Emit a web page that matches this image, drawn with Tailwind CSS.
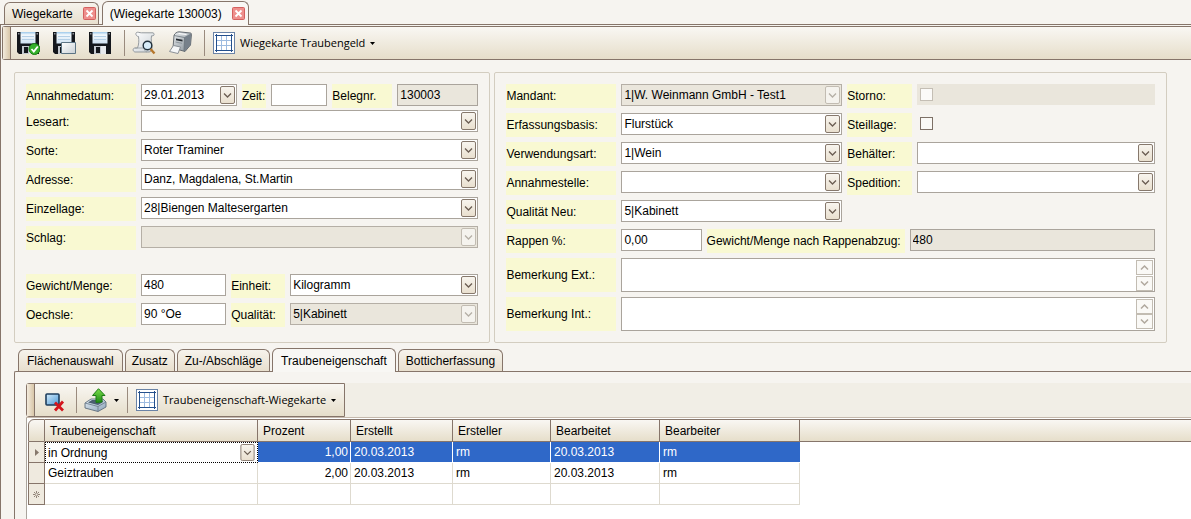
<!DOCTYPE html>
<html lang="de">
<head>
<meta charset="utf-8">
<title>Wiegekarte 130003</title>
<script src="https://cdn.jsdelivr.net/npm/@tailwindcss/browser@4"></script>
</head>
<body class="flex min-h-screen flex-col bg-[#f6f4f0] font-['Liberation_Sans',Arial,sans-serif] text-xs text-black">
<svg class="absolute size-0" aria-hidden="true">
  <defs>
    <linearGradient id="g-btn" x1="0" y1="0" x2="0" y2="1"><stop offset="0" stop-color="#f8f5ef"/><stop offset="1" stop-color="#e9dfce"/></linearGradient>
    <linearGradient id="g-blue" x1="0" y1="0" x2="1" y2="1"><stop offset="0" stop-color="#d4ecfb"/><stop offset="1" stop-color="#4b98d6"/></linearGradient>
    <linearGradient id="g-label" x1="0" y1="0" x2="0" y2="1"><stop offset="0" stop-color="#9cc8ea"/><stop offset=".25" stop-color="#f4f9fd"/><stop offset="1" stop-color="#cfe2f2"/></linearGradient>
    <linearGradient id="g-steel" x1="0" y1="0" x2="1" y2="1"><stop offset="0" stop-color="#eceff1"/><stop offset="1" stop-color="#7d8890"/></linearGradient>
    <linearGradient id="g-tray" x1="0" y1="0" x2="1" y2="1"><stop offset="0" stop-color="#e4edf5"/><stop offset="1" stop-color="#8ba3b8"/></linearGradient>
    <linearGradient id="g-green" x1="0" y1="0" x2="0" y2="1"><stop offset="0" stop-color="#7be04a"/><stop offset="1" stop-color="#1f8a16"/></linearGradient>
    <linearGradient id="g-paper" x1="0" y1="0" x2="1" y2="1"><stop offset="0" stop-color="#ffffff"/><stop offset="1" stop-color="#c9d0d5"/></linearGradient>
  </defs>
  <symbol id="drop" viewBox="0 0 15 18"><rect x=".5" y=".5" width="14" height="17" rx="1.5" fill="url(#g-btn)" stroke="#86786c"/><path d="M4 7.500l3.500 3.500L11 7.500" fill="none" stroke="#6b5d52" stroke-width="1.300"/></symbol>
  <symbol id="drop-off" viewBox="0 0 15 18"><rect x=".5" y=".5" width="14" height="17" rx="1.5" fill="#f5f3ee" stroke="#c2bcb2"/><path d="M4 7.500l3.500 3.500L11 7.500" fill="none" stroke="#b5afa6" stroke-width="1.300"/></symbol>
  <symbol id="spin-up" viewBox="0 0 17 15"><rect x=".5" y=".5" width="16" height="14" fill="#faf9f6" stroke="#c2bcb2"/><path d="M5 9.500L8.500 6l3.500 3.500" fill="none" stroke="#b0a89e" stroke-width="1.500"/></symbol>
  <symbol id="spin-down" viewBox="0 0 17 15"><rect x=".5" y=".5" width="16" height="14" fill="#faf9f6" stroke="#c2bcb2"/><path d="M5 5.500L8.500 9l3.500-3.500" fill="none" stroke="#b0a89e" stroke-width="1.500"/></symbol>
  <symbol id="close" viewBox="0 0 13 13"><rect x=".5" y=".5" width="12" height="12" rx="1" fill="#ee8f8c" stroke="#d4605f"/><path d="M3.500 3.500l6 6m0-6l-6 6" stroke="#fff" stroke-width="1.800"/></symbol>
  <symbol id="disk" viewBox="0 0 22 22"><path d="M0 0h22v22H2l-2-2z" fill="#14171c"/><path d="M3.500 0h15v11.500h-15z" fill="url(#g-label)"/><path d="M5 4.500h12M5 7.500h12" stroke="#b4cfe6"/><path d="M5 14h12v8H5z" fill="#c3c8ce"/><path d="M12 14h5v8h-5z" fill="#e6e9ec"/><path d="M7 15h4v6H7z" fill="#14171c"/><path d="M1 1h1.500v1.500H1zM19.500 1H21v1.500h-1.500z" fill="#8a9099"/></symbol>
  <symbol id="gridicon" viewBox="0 0 22 22"><rect x=".5" y=".5" width="21" height="21" fill="#fff" stroke="#6a83a6"/><path d="M8.500 4v14M13.500 4v14M4 8.500h14M4 13.500h14" stroke="#9dbbe0"/><path d="M2 3.500h18M2 18.500h18M3.500 2v18M18.500 2v18" stroke="#24508c"/></symbol>
</svg>

<!-- Document tabs -->
<nav class="flex h-6 shrink-0 items-end gap-[3px] pl-1" aria-label="Dokumente">
  <div class="flex h-[22px] items-center gap-2.5 rounded-t-md border border-b-0 border-[#86756a] bg-linear-to-b from-[#f6f3ec] to-[#e8dfce] pr-[2px] pl-[7px]">
    <a href="#wiegekarte">Wiegekarte</a>
    <button type="button" aria-label="Wiegekarte schließen"><svg class="block h-[13px] w-[13px]"><use href="#close"/></svg></button>
  </div>
  <div class="relative z-10 -mb-px flex h-6 items-center gap-2.5 rounded-t-md border border-b-0 border-[#86756a] bg-[#f8f7f4] pr-[3px] pl-[7px]">
    <a href="#wiegekarte-130003">(Wiegekarte 130003)</a>
    <button type="button" aria-label="Wiegekarte 130003 schließen"><svg class="block h-[13px] w-[13px]"><use href="#close"/></svg></button>
  </div>
</nav>

<div class="flex grow flex-col border-t border-l border-[#86756a] pt-px pl-px">
  <!-- Main toolbar -->
  <div role="toolbar" class="flex h-[34px] shrink-0 items-center rounded-l-[3px] border border-r-0 border-[#86756a] bg-linear-to-b from-[#f9f7f3] to-[#e6deca]">
    <span class="h-full w-2 border-r border-[#86756a] bg-linear-to-r from-[#f3ebdd] to-[#d8c6a8]"></span>
    <div class="flex items-center gap-[13px] pl-1.5">
      <button type="button" aria-label="Speichern und schließen"><svg class="block h-6 w-[23px]" viewBox="0 0 23 24"><use href="#disk" x="0" y="1" width="22" height="22"/><circle cx="17.500" cy="18" r="5.500" fill="#36b02c" stroke="#147a12"/><path d="M14.500 18l2.300 2.500 4-5" fill="none" stroke="#fff" stroke-width="1.800"/></svg></button>
      <button type="button" aria-label="Speichern und neu"><svg class="block h-6 w-[23px]" viewBox="0 0 23 24"><use href="#disk" x="0" y="1" width="22" height="22"/><path d="M8.500 11.500h14v11h-14z" fill="url(#g-paper)" stroke="#5c7484"/></svg></button>
      <button type="button" aria-label="Speichern"><svg class="block h-6 w-[22px]" viewBox="0 0 22 24"><use href="#disk" x="0" y="1" width="22" height="22"/></svg></button>
    </div>
    <span class="mr-[7px] ml-[13px] h-[26px] w-px bg-[#9a8b7e]"></span>
    <div class="flex items-center gap-3">
      <button type="button" aria-label="Vorschau"><svg class="block h-6 w-6" viewBox="0 0 24 24"><path d="M4.500 1.500c1.500-.8 3 .3 5 .3H21c1.500.5 1.500 2.500 0 3h-1.500c-.8 4 .5 8 .5 12 0 2.500-1 4.200-3 4.200H3c-2.500-.5-2.500-4 0-4h2.500c1.500-4 1.500-7.500 1-11.500C4.500 5.500 3 3 4.500 1.500z" fill="url(#g-paper)" stroke="#8b9196" stroke-width=".9"/><path d="M3 17h10c-1 1.500 0 3.500 2 4" fill="none" stroke="#9ba1a6" stroke-width=".9"/><circle cx="15.500" cy="14.500" r="4.300" fill="#d6ebf8" stroke="#20303c" stroke-width="1.400"/><path d="M18.500 18l4 4.500" stroke="#b5772c" stroke-width="2.400"/></svg></button>
      <button type="button" aria-label="Drucken"><svg class="block h-6 w-6" viewBox="0 0 24 24"><path d="M6 4.500C6.500 2.500 9 .8 11 .8L22.500 2c1 .2 1 1 .9 2L22.500 14 17 20.500 5 17z" fill="url(#g-steel)" stroke="#596067" stroke-width=".9"/><path d="M16.500 6L23 2.500 22.500 14 16 20.500z" fill="#76808a"/><path d="M6 4.500L16.500 6.500 16 20" fill="none" stroke="#6a737b" stroke-width=".8"/><path d="M8 7.500l6.500 1.300v1.800L8 9.300z" fill="#242a30"/><path d="M7.500 11l6.500 1.300" stroke="#8d969d"/><path d="M10.500 2.500l8 1" stroke="#fff"/><path d="M5.500 14.500l7 1.500-2.500 6.500-8.500-2z" fill="#f5f7f8" stroke="#7f868c" stroke-width=".9"/></svg></button>
    </div>
    <span class="mr-2 ml-3 h-[26px] w-px bg-[#9a8b7e]"></span>
    <button type="button" class="flex items-center gap-[5px] font-['Open_Sans',sans-serif] text-[11px]"><svg class="block h-[22px] w-[22px]"><use href="#gridicon"/></svg><span>Wiegekarte Traubengeld</span><svg class="h-[3px] w-[5px]" viewBox="0 0 5 3"><path d="M0 0h5L2.500 3z"/></svg></button>
  </div>

  <!-- Form -->
  <form class="grid grid-cols-[476fr_672fr] gap-1 pt-3 pr-6 pl-3">
    <fieldset class="flex min-w-0 flex-col gap-[5px] rounded-xs border border-[#d3cdc0] px-[11px] pt-[11px] pb-[15px] leading-6">
      <div class="-mb-[3px] flex h-6 gap-[5px]">
        <label for="datum" class="w-[110px] bg-[#f9f9d2]">Annahmedatum:</label>
        <div class="flex h-[22px] flex-[94] items-center border border-[#aaa49c] bg-white pr-px"><input id="datum" value="29.01.2013" class="h-5 w-0 grow bg-transparent pl-0.5 outline-none"><button type="button" aria-label="Kalender öffnen"><svg class="block h-[18px] w-[15px]"><use href="#drop"/></svg></button></div>
        <label for="zeit" class="w-6 bg-[#f9f9d2]">Zeit:</label>
        <input id="zeit" class="h-[22px] w-0 flex-[51] border border-[#aaa49c] bg-white px-0.5">
        <label for="beleg" class="w-[60px] bg-[#f9f9d2]">Belegnr.</label>
        <input id="beleg" value="130003" readonly class="h-[22px] w-0 flex-[76] border border-[#aaa49c] bg-[#eae6dc] px-0.5">
      </div>
      <div class="flex h-6 gap-[5px]">
        <label for="leseart" class="w-[110px] bg-[#f9f9d2]">Leseart:</label>
        <div class="relative h-[22px] grow"><select id="leseart" class="block h-[22px] w-full appearance-none border border-[#aaa49c] bg-white pl-0.5 leading-5"><option></option></select><svg class="pointer-events-none absolute top-0.5 right-0.5 h-[18px] w-[15px]"><use href="#drop"/></svg></div>
      </div>
      <div class="flex h-6 gap-[5px]">
        <label for="sorte" class="w-[110px] bg-[#f9f9d2]">Sorte:</label>
        <div class="relative h-[22px] grow"><select id="sorte" class="block h-[22px] w-full appearance-none border border-[#aaa49c] bg-white pl-0.5 leading-5"><option>Roter Traminer</option></select><svg class="pointer-events-none absolute top-0.5 right-0.5 h-[18px] w-[15px]"><use href="#drop"/></svg></div>
      </div>
      <div class="flex h-6 gap-[5px]">
        <label for="adresse" class="w-[110px] bg-[#f9f9d2]">Adresse:</label>
        <div class="relative h-[22px] grow"><select id="adresse" class="block h-[22px] w-full appearance-none border border-[#aaa49c] bg-white pl-0.5 leading-5"><option>Danz, Magdalena, St.Martin</option></select><svg class="pointer-events-none absolute top-0.5 right-0.5 h-[18px] w-[15px]"><use href="#drop"/></svg></div>
      </div>
      <div class="flex h-6 gap-[5px]">
        <label for="einzellage" class="w-[110px] bg-[#f9f9d2]">Einzellage:</label>
        <div class="relative h-[22px] grow"><select id="einzellage" class="block h-[22px] w-full appearance-none border border-[#aaa49c] bg-white pl-0.5 leading-5"><option>28|Biengen Maltesergarten</option></select><svg class="pointer-events-none absolute top-0.5 right-0.5 h-[18px] w-[15px]"><use href="#drop"/></svg></div>
      </div>
      <div class="mb-[19px] flex h-6 gap-[5px]">
        <label for="schlag" class="w-[110px] bg-[#f9f9d2]">Schlag:</label>
        <div class="relative h-[22px] grow"><select id="schlag" disabled class="block h-[22px] w-full appearance-none border border-[#b5afa6] bg-[#eae6dc] pl-0.5 leading-5 opacity-100"><option></option></select><svg class="pointer-events-none absolute top-0.5 right-0.5 h-[18px] w-[15px]"><use href="#drop-off"/></svg></div>
      </div>
      <div class="flex h-6 gap-[5px]">
        <label for="gewicht" class="w-[110px] bg-[#f9f9d2]">Gewicht/Menge:</label>
        <input id="gewicht" value="480" class="h-[22px] w-0 flex-[79] border border-[#aaa49c] bg-white px-0.5">
        <label for="einheit" class="w-[54px] bg-[#f9f9d2]">Einheit:</label>
        <div class="relative h-[22px] flex-[188]"><select id="einheit" class="block h-[22px] w-full appearance-none border border-[#aaa49c] bg-white pl-0.5 leading-5"><option>Kilogramm</option></select><svg class="pointer-events-none absolute top-0.5 right-0.5 h-[18px] w-[15px]"><use href="#drop"/></svg></div>
      </div>
      <div class="flex h-6 gap-[5px]">
        <label for="oechsle" class="w-[110px] bg-[#f9f9d2]">Oechsle:</label>
        <input id="oechsle" value="90 °Oe" class="h-[22px] w-0 flex-[79] border border-[#aaa49c] bg-white px-0.5">
        <label for="qualitaet" class="w-[54px] bg-[#f9f9d2]">Qualität:</label>
        <div class="relative h-[22px] flex-[188]"><select id="qualitaet" disabled class="block h-[22px] w-full appearance-none border border-[#b5afa6] bg-[#eae6dc] pl-0.5 leading-5 text-black opacity-100"><option>5|Kabinett</option></select><svg class="pointer-events-none absolute top-0.5 right-0.5 h-[18px] w-[15px]"><use href="#drop-off"/></svg></div>
      </div>
    </fieldset>

    <fieldset class="flex min-w-0 flex-col gap-[5px] rounded-xs border border-[#d3cdc0] px-[11px] pt-[11px] pb-[11px] leading-6">
      <div class="grid h-6 grid-cols-[110px_221fr_65px_238fr] gap-[5px]">
        <label for="mandant" class="bg-[#f9f9d2]">Mandant:</label>
        <div class="relative h-[22px]"><select id="mandant" disabled class="block h-[22px] w-full appearance-none border border-[#b5afa6] bg-[#eae6dc] pl-0.5 leading-5 text-black opacity-100"><option>1|W. Weinmann GmbH - Test1</option></select><svg class="pointer-events-none absolute top-0.5 right-0.5 h-[18px] w-[15px]"><use href="#drop-off"/></svg></div>
        <label for="storno" class="bg-[#f9f9d2]">Storno:</label>
        <div class="flex h-[21px] items-center bg-[#eae6dc] pl-[3px]"><input id="storno" type="checkbox" disabled class="h-[13px] w-[13px] appearance-none border border-[#c4beb4] bg-[#fbfaf8]"></div>
      </div>
      <div class="grid h-6 grid-cols-[110px_221fr_65px_238fr] gap-[5px]">
        <label for="basis" class="bg-[#f9f9d2]">Erfassungsbasis:</label>
        <div class="relative h-[22px]"><select id="basis" class="block h-[22px] w-full appearance-none border border-[#aaa49c] bg-white pl-0.5 leading-5"><option>Flurstück</option></select><svg class="pointer-events-none absolute top-0.5 right-0.5 h-[18px] w-[15px]"><use href="#drop"/></svg></div>
        <label for="steillage" class="bg-[#f9f9d2]">Steillage:</label>
        <div class="flex h-[21px] items-center pl-[3px]"><input id="steillage" type="checkbox" class="h-[13px] w-[13px] appearance-none border border-[#7d7066] bg-[#faf9f6]"></div>
      </div>
      <div class="grid h-6 grid-cols-[110px_221fr_65px_238fr] gap-[5px]">
        <label for="verwendung" class="bg-[#f9f9d2]">Verwendungsart:</label>
        <div class="relative h-[22px]"><select id="verwendung" class="block h-[22px] w-full appearance-none border border-[#aaa49c] bg-white pl-0.5 leading-5"><option>1|Wein</option></select><svg class="pointer-events-none absolute top-0.5 right-0.5 h-[18px] w-[15px]"><use href="#drop"/></svg></div>
        <label for="behaelter" class="bg-[#f9f9d2]">Behälter:</label>
        <div class="relative h-[22px]"><select id="behaelter" class="block h-[22px] w-full appearance-none border border-[#aaa49c] bg-white pl-0.5 leading-5"><option></option></select><svg class="pointer-events-none absolute top-0.5 right-0.5 h-[18px] w-[15px]"><use href="#drop"/></svg></div>
      </div>
      <div class="grid h-6 grid-cols-[110px_221fr_65px_238fr] gap-[5px]">
        <label for="annahme" class="bg-[#f9f9d2]">Annahmestelle:</label>
        <div class="relative h-[22px]"><select id="annahme" class="block h-[22px] w-full appearance-none border border-[#aaa49c] bg-white pl-0.5 leading-5"><option></option></select><svg class="pointer-events-none absolute top-0.5 right-0.5 h-[18px] w-[15px]"><use href="#drop"/></svg></div>
        <label for="spedition" class="bg-[#f9f9d2]">Spedition:</label>
        <div class="relative h-[22px]"><select id="spedition" class="block h-[22px] w-full appearance-none border border-[#aaa49c] bg-white pl-0.5 leading-5"><option></option></select><svg class="pointer-events-none absolute top-0.5 right-0.5 h-[18px] w-[15px]"><use href="#drop"/></svg></div>
      </div>
      <div class="grid h-6 grid-cols-[110px_221fr_65px_238fr] gap-[5px]">
        <label for="qneu" class="bg-[#f9f9d2]">Qualität Neu:</label>
        <div class="relative h-[22px]"><select id="qneu" class="block h-[22px] w-full appearance-none border border-[#aaa49c] bg-white pl-0.5 leading-5"><option>5|Kabinett</option></select><svg class="pointer-events-none absolute top-0.5 right-0.5 h-[18px] w-[15px]"><use href="#drop"/></svg></div>
      </div>
      <div class="grid h-6 grid-cols-[110px_80fr_198px_245fr] gap-[5px]">
        <label for="rappen" class="bg-[#f9f9d2]">Rappen %:</label>
        <input id="rappen" value="0,00" class="h-[22px] w-full border border-[#aaa49c] bg-white px-0.5">
        <label for="abzug" class="bg-[#f9f9d2] whitespace-nowrap">Gewicht/Menge nach Rappenabzug:</label>
        <input id="abzug" value="480" readonly class="h-[22px] w-full border border-[#aaa49c] bg-[#eae6dc] px-0.5">
      </div>
      <div class="flex h-[34px] gap-[5px]">
        <label for="bemext" class="flex w-[110px] items-center bg-[#f9f9d2]">Bemerkung Ext.:</label>
        <div class="flex grow items-center border border-[#aaa49c] bg-white pr-px"><textarea id="bemext" class="h-8 w-0 grow resize-none px-0.5 outline-none"></textarea><div class="flex flex-col gap-px"><button type="button" aria-label="Ext. nach oben"><svg class="block h-[15px] w-[17px]"><use href="#spin-up"/></svg></button><button type="button" aria-label="Ext. nach unten"><svg class="block h-[15px] w-[17px]"><use href="#spin-down"/></svg></button></div></div>
      </div>
      <div class="flex h-[34px] gap-[5px]">
        <label for="bemint" class="flex w-[110px] items-center bg-[#f9f9d2]">Bemerkung Int.:</label>
        <div class="flex grow items-center border border-[#aaa49c] bg-white pr-px"><textarea id="bemint" class="h-8 w-0 grow resize-none px-0.5 outline-none"></textarea><div class="flex flex-col"><button type="button" aria-label="Int. nach oben"><svg class="block h-[15px] w-[17px]"><use href="#spin-up"/></svg></button><button type="button" aria-label="Int. nach unten"><svg class="block h-[15px] w-[17px]"><use href="#spin-down"/></svg></button></div></div>
      </div>
    </fieldset>
  </form>

  <!-- Detail tabs -->
  <div role="tablist" class="mt-[5px] flex h-[23px] shrink-0 items-end gap-0.5 pl-4">
    <button role="tab" type="button" class="h-[22px] rounded-t-md border border-b-0 border-[#86756a] bg-linear-to-b from-[#f6f3ec] to-[#e8dfce] px-2">Flächenauswahl</button>
    <button role="tab" type="button" class="h-[22px] rounded-t-md border border-b-0 border-[#86756a] bg-linear-to-b from-[#f6f3ec] to-[#e8dfce] px-1.5">Zusatz</button>
    <button role="tab" type="button" class="h-[22px] rounded-t-md border border-b-0 border-[#86756a] bg-linear-to-b from-[#f6f3ec] to-[#e8dfce] px-[7px]">Zu-/Abschläge</button>
    <button role="tab" type="button" aria-selected="true" class="relative z-10 -mb-px h-6 rounded-t-md border border-b-0 border-[#86756a] bg-[#f8f7f4] px-2">Traubeneigenschaft</button>
    <button role="tab" type="button" class="h-[22px] rounded-t-md border border-b-0 border-[#86756a] bg-linear-to-b from-[#f6f3ec] to-[#e8dfce] px-[7px]">Botticherfassung</button>
  </div>
  <section class="ml-3 flex grow flex-col rounded-tl-xs border-t border-l border-[#86756a] pt-[11px] pl-[11px]">
    <div class="border-b border-[#c5b9ad] bg-[#f1eee6]">
      <div role="toolbar" class="flex h-[34px] w-fit items-center rounded-l-[3px] border border-[#86756a] bg-linear-to-b from-[#f9f7f3] to-[#e6deca]">
        <span class="h-full w-2 border-r border-[#86756a] bg-linear-to-r from-[#f3ebdd] to-[#d8c6a8]"></span>
        <button type="button" class="pt-1 pl-2.5" aria-label="Zeile löschen"><svg class="block h-[19px] w-5" viewBox="0 0 20 19"><rect x="1" y="1" width="13" height="11" rx="1" fill="url(#g-blue)" stroke="#1d3d5c" stroke-width="1.600"/><path d="M10 9.500l8 8M18 8.500l-8 9" stroke="#d3141c" stroke-width="2.800"/></svg></button>
        <span class="mr-[7px] ml-[11px] h-[26px] w-px bg-[#9a8b7e]"></span>
        <button type="button" class="flex items-center gap-[7px]" aria-label="Exportieren"><svg class="block h-6 w-[23px]" viewBox="0 0 23 24"><path d="M1 15l6-4h12l3 3v5l-8 4.500L1 20z" fill="url(#g-tray)" stroke="#5d6d7c" stroke-width=".9"/><path d="M1 15l13 3.500L22 14M14 18.500v5" fill="none" stroke="#6f8090" stroke-width=".9"/><path d="M4 14.500l4-2.500h10l1 2-5 3z" fill="#4a5e70"/><path d="M14.500.7L21 7.500h-3V14l-6 .5v-7H8.500z" fill="url(#g-green)" stroke="#1b7a14"/></svg><svg class="h-[3px] w-[5px]" viewBox="0 0 5 3"><path d="M0 0h5L2.500 3z"/></svg></button>
        <span class="mr-2 ml-2 h-[26px] w-px bg-[#9a8b7e]"></span>
        <button type="button" class="flex items-center gap-[5px] pr-2 font-['Open_Sans',sans-serif] text-[11px]"><svg class="block h-[22px] w-[22px]"><use href="#gridicon"/></svg><span>Traubeneigenschaft-Wiegekarte</span><svg class="h-[3px] w-[5px]" viewBox="0 0 5 3"><path d="M0 0h5L2.500 3z"/></svg></button>
      </div>
    </div>
    <div class="grow border-l border-[#aaa49c] bg-white pt-px pl-px">
      <table class="w-full table-fixed border-separate border-spacing-0 text-left">
        <colgroup><col class="w-[17px]"><col class="w-[213px]"><col class="w-[93px]"><col class="w-[102px]"><col class="w-[98px]"><col class="w-[109px]"><col class="w-[140px]"><col></colgroup>
        <thead>
          <tr class="h-[23px] *:border-y *:border-[#86756a] *:bg-linear-to-b *:from-[#f9f7f3] *:to-[#e6deca] *:p-0 *:pl-[5px] *:font-normal">
            <th class="rounded-tl-md border-x"></th><th class="border-r">Traubeneigenschaft</th><th class="border-r">Prozent</th><th class="border-r">Erstellt</th><th class="border-r">Ersteller</th><th class="border-r">Bearbeitet</th><th class="border-r">Bearbeiter</th><th></th>
          </tr>
        </thead>
        <tbody>
          <tr class="h-[21px] *:p-0">
            <th class="border-x border-b border-[#86756a] bg-[#efeadf]"><svg class="mx-auto block h-[7px] w-1" viewBox="0 0 4 7"><path d="M0 0l4 3.500L0 7z" fill="#86786c"/></svg></th>
            <td class="border border-dotted border-black"><div class="relative"><select aria-label="Traubeneigenschaft" class="block h-[19px] w-full appearance-none bg-white pl-0.5"><option>in Ordnung</option></select><svg class="pointer-events-none absolute top-px right-0.5 h-[17px] w-[15px]"><use href="#drop"/></svg></div></td>
            <td class="border-r border-b border-white bg-[#2f68c8] text-right text-white"><span class="pr-0.5">1,00</span></td>
            <td class="border-r border-b border-white bg-[#2f68c8] text-white"><span class="pl-[3px]">20.03.2013</span></td>
            <td class="border-r border-b border-white bg-[#2f68c8] text-white"><span class="pl-[3px]">rm</span></td>
            <td class="border-r border-b border-white bg-[#2f68c8] text-white"><span class="pl-[3px]">20.03.2013</span></td>
            <td class="border-b border-white bg-[#2f68c8] text-white"><span class="pl-[3px]">rm</span></td>
            <td></td>
          </tr>
          <tr class="h-[21px] *:p-0">
            <th class="border-x border-b border-[#86756a] bg-[#efeadf]"></th>
            <td class="border-r border-b border-[#dedacf]"><span class="pl-[3px]">Geiztrauben</span></td>
            <td class="border-r border-b border-[#dedacf] text-right"><span class="pr-0.5">2,00</span></td>
            <td class="border-r border-b border-[#dedacf]"><span class="pl-[3px]">20.03.2013</span></td>
            <td class="border-r border-b border-[#dedacf]"><span class="pl-[3px]">rm</span></td>
            <td class="border-r border-b border-[#dedacf]"><span class="pl-[3px]">20.03.2013</span></td>
            <td class="border-r border-b border-[#dedacf]"><span class="pl-[3px]">rm</span></td>
            <td></td>
          </tr>
          <tr class="h-[21px] *:p-0">
            <th class="border-x border-b border-[#86756a] bg-[#efeadf]"><svg class="mx-auto block h-[7px] w-[7px]" viewBox="0 0 7 7"><path d="M3.500 0v2.500M3.500 4.500V7M0 3.500h2.500M4.500 3.500H7M1 1l1.700 1.700M4.300 4.300L6 6M6 1L4.300 2.700M2.700 4.300L1 6" stroke="#86786c" stroke-width=".9"/></svg></th>
            <td class="border-r border-b border-[#dedacf]"></td><td class="border-r border-b border-[#dedacf]"></td><td class="border-r border-b border-[#dedacf]"></td><td class="border-r border-b border-[#dedacf]"></td><td class="border-r border-b border-[#dedacf]"></td><td class="border-r border-b border-[#dedacf]"></td><td></td>
          </tr>
        </tbody>
      </table>
    </div>
  </section>
</div>
</body>
</html>
